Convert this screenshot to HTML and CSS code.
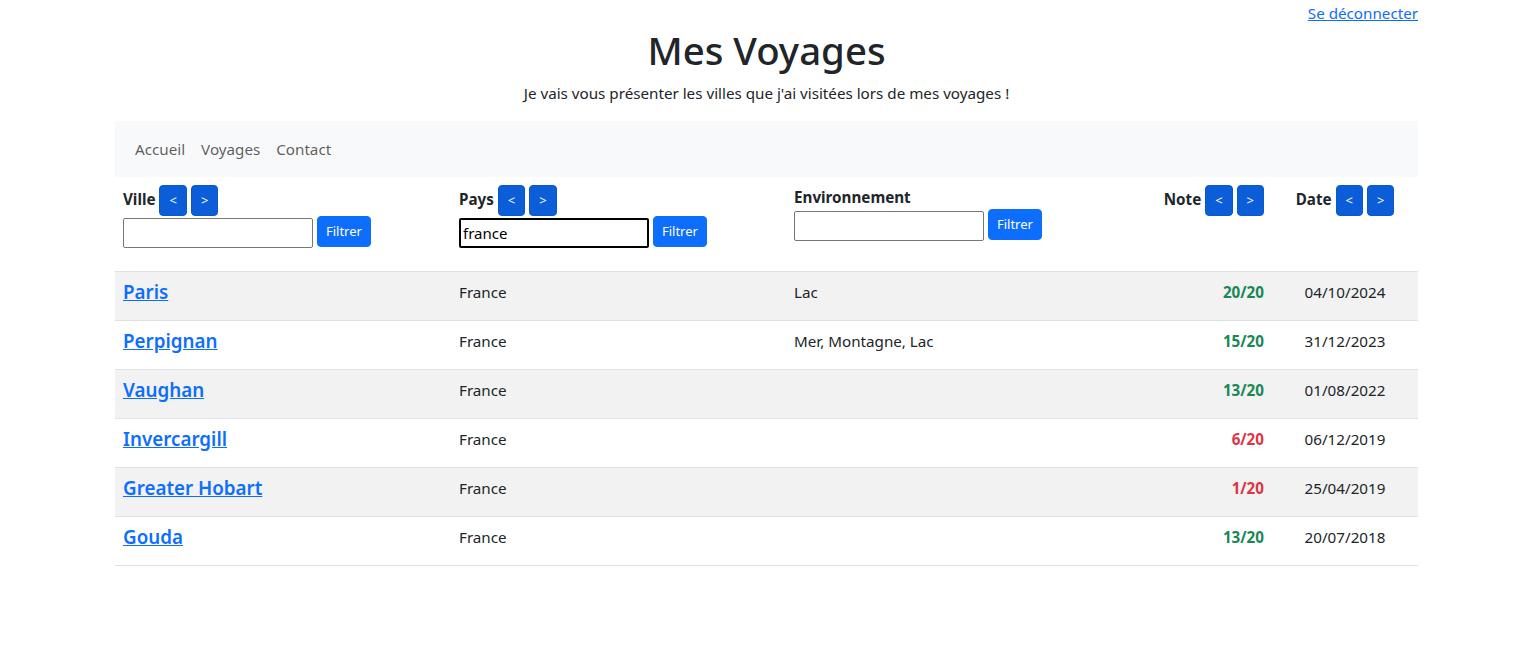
FILE: index.html
```html
<!DOCTYPE html>
<html lang="fr">
<head>
<meta charset="utf-8">
<title>Mes Voyages</title>
<link rel="stylesheet" href="styles.css">
</head>
<body>
<div class="page">
  <div class="topbar"><a href="#" class="logout">Se déconnecter</a></div>
  <h1 class="title">Mes Voyages</h1>
  <p class="subtitle">Je vais vous présenter les villes que j'ai visitées lors de mes voyages !</p>
  <nav class="navbar">
    <a href="#" class="nav-link">Accueil</a>
    <a href="#" class="nav-link">Voyages</a>
    <a href="#" class="nav-link">Contact</a>
  </nav>
  <table class="trips">
    <colgroup>
      <col class="c-ville"><col class="c-pays"><col class="c-env"><col class="c-note"><col class="c-date">
    </colgroup>
    <thead>
      <tr>
        <th>Ville <button class="btn-sort">&lt;</button> <button class="btn-sort">&gt;</button><br><input class="filter-input" type="text"> <button class="btn-filter">Filtrer</button></th>
        <th>Pays <button class="btn-sort">&lt;</button> <button class="btn-sort">&gt;</button><br><input class="filter-input focused" type="text" value="france"> <button class="btn-filter">Filtrer</button></th>
        <th>Environnement<br><input class="filter-input" type="text"> <button class="btn-filter">Filtrer</button></th>
        <th class="right">Note <button class="btn-sort">&lt;</button> <button class="btn-sort">&gt;</button></th>
        <th class="center">Date <button class="btn-sort">&lt;</button> <button class="btn-sort">&gt;</button></th>
      </tr>
    </thead>
    <tbody>
      <tr><td><h5 class="city"><a href="#">Paris</a></h5></td><td>France</td><td>Lac</td><td class="right note good">20/20</td><td class="center">04/10/2024</td></tr>
      <tr><td><h5 class="city"><a href="#">Perpignan</a></h5></td><td>France</td><td>Mer, Montagne, Lac</td><td class="right note good">15/20</td><td class="center">31/12/2023</td></tr>
      <tr><td><h5 class="city"><a href="#">Vaughan</a></h5></td><td>France</td><td></td><td class="right note good">13/20</td><td class="center">01/08/2022</td></tr>
      <tr><td><h5 class="city"><a href="#">Invercargill</a></h5></td><td>France</td><td></td><td class="right note bad">6/20</td><td class="center">06/12/2019</td></tr>
      <tr><td><h5 class="city"><a href="#">Greater Hobart</a></h5></td><td>France</td><td></td><td class="right note bad">1/20</td><td class="center">25/04/2019</td></tr>
      <tr><td><h5 class="city"><a href="#">Gouda</a></h5></td><td>France</td><td></td><td class="right note good">13/20</td><td class="center">20/07/2018</td></tr>
    </tbody>
  </table>
</div>
</body>
</html>
```

FILE: styles.css
```css
* { box-sizing: border-box; }
html, body { margin: 0; padding: 0; background: #fff; }
body {
  font-family: "Noto Sans", "Open Sans", sans-serif;
  font-size: 15.2px;
  line-height: 24px;
  color: #212529;
}
.page { width: 1303px; margin: 0 0 0 115px; }
.topbar { text-align: right; padding-top: 1px; height: 25px; }
.logout { color: #0d6efd; text-decoration: underline; }
.title {
  margin: 1px 0 7px;
  text-align: center;
  font-size: 38.4px;
  font-weight: 500;
  line-height: 48px;
}
.subtitle { margin: 0 0 16px; text-align: center; }
.navbar {
  display: flex;
  background: #f8f9fa;
  padding: 8px 12px;
}
.nav-link {
  padding: 8px;
  color: rgba(0,0,0,0.65);
  text-decoration: none;
}
.trips { width: 1303px; border-collapse: collapse; table-layout: fixed; }
.c-ville { width: 336px; }
.c-pays { width: 335px; }
.c-env { width: 336px; }
.c-note { width: 150px; }
.c-date { width: 146px; }
.trips th {
  text-align: left;
  vertical-align: top;
  padding: 8px 8px 23px;
  font-weight: 700;
  border-bottom: 1px solid #dee2e6;
  white-space: nowrap;
}
.trips td {
  vertical-align: top;
  padding: 8px;
  border-bottom: 1px solid #dee2e6;
}
.trips tbody tr:nth-child(odd) td { background: #f2f2f2; }
.trips .right { text-align: right; }
.trips .center { text-align: center; }
.btn-sort, .btn-filter {
  font-family: inherit;
  font-size: 13px;
  line-height: 21px;
  padding: 4px 8px;
  border: 1px solid transparent;
  border-radius: 4px;
  color: #fff;
  cursor: pointer;
}
.btn-sort { background: #0b5ed7; border-color: #0a58ca; padding: 4px 9px; }
.btn-filter { background: #0d6efd; border-color: #0d6efd; }
.filter-input {
  width: 190px;
  height: 30px;
  border: 1px solid #767676;
  border-radius: 2px;
  padding: 1px 3px;
  font-family: inherit;
  font-size: 15px;
  color: #000;
  vertical-align: -3px;
}
.filter-input.focused {
  border: 2px solid #000;
  padding: 0 2px;
  text-decoration: underline wavy #e04040;
  text-decoration-skip-ink: none;
  text-underline-offset: 3px;
}
.city {
  margin: 0 0 8px;
  font-size: 18.8px;
  font-weight: 600;
  line-height: 24px;
}
.city a { color: #0d6efd; text-decoration: underline; }
.note { font-weight: 700; }
.good { color: #198754; }
.bad { color: #dc3545; }
```
